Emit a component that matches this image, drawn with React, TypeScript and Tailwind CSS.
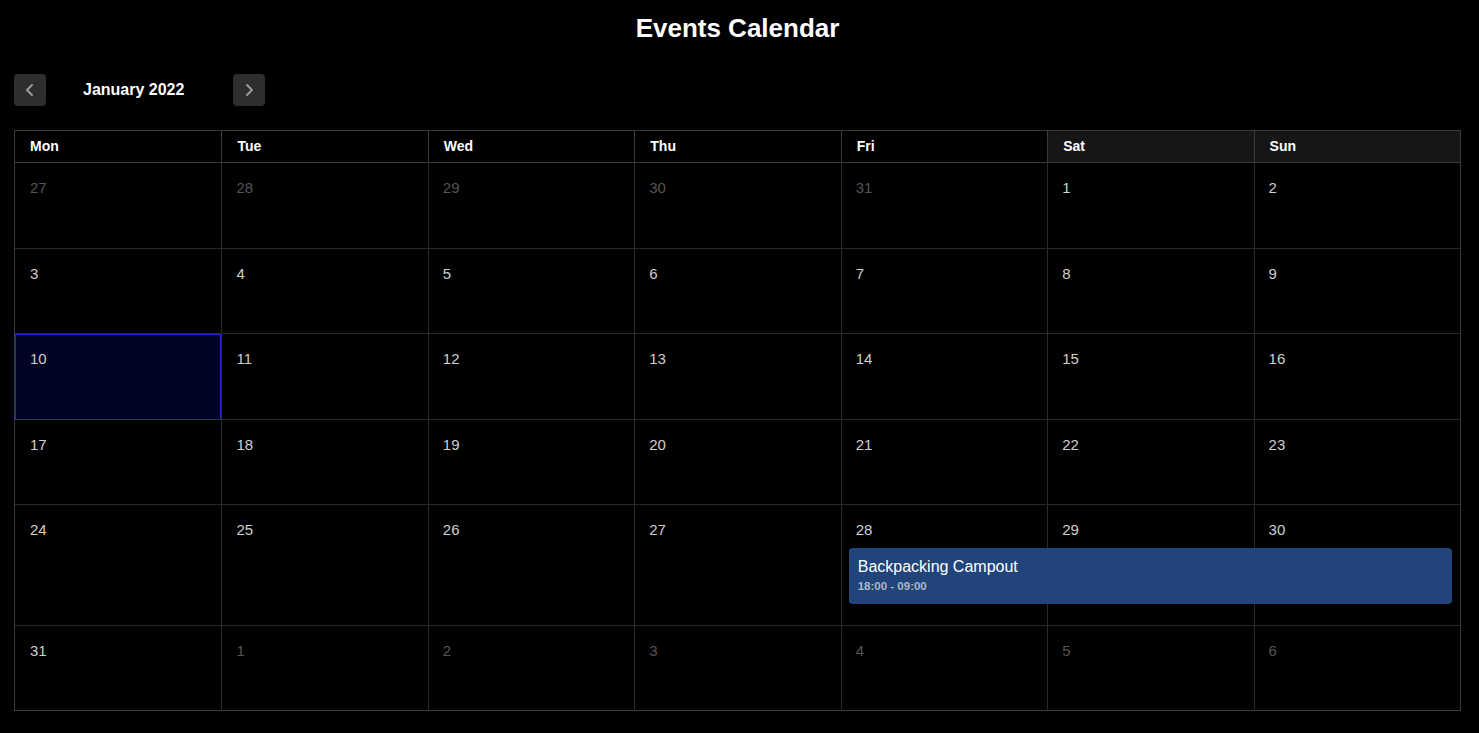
import React from "react";

type Day = { d: number; other?: boolean; today?: boolean };

const colStart = [
  "col-start-1",
  "col-start-2",
  "col-start-3",
  "col-start-4",
  "col-start-5",
  "col-start-6",
  "col-start-7",
];

const dayNames = ["Mon", "Tue", "Wed", "Thu", "Fri", "Sat", "Sun"];

function buildWeeks(): Day[][] {
  const days: Day[] = [];
  [27, 28, 29, 30, 31].forEach((d) => days.push({ d, other: true }));
  for (let d = 1; d <= 31; d++) days.push({ d, today: d === 10 });
  [1, 2, 3, 4, 5, 6].forEach((d) => days.push({ d, other: true }));
  const weeks: Day[][] = [];
  for (let i = 0; i < days.length; i += 7) weeks.push(days.slice(i, i + 7));
  return weeks;
}

function Chevron({ dir }: { dir: "left" | "right" }) {
  return (
    <svg width="12" height="14" viewBox="0 0 12 14" fill="none">
      <polyline
        points={dir === "left" ? "8,2 3,7 8,12" : "4,2 9,7 4,12"}
        stroke="#9a9a9a"
        strokeWidth="2"
        strokeLinecap="round"
        strokeLinejoin="round"
      />
    </svg>
  );
}

function cellClass(day: Day, i: number, last: boolean) {
  const h = last ? "min-h-[84px]" : "min-h-[85.5px]";
  if (day.today) {
    return `${colStart[i]} row-start-1 row-span-2 ${h} border border-[#2424d4] bg-[#000322]`;
  }
  return `${colStart[i]} row-start-1 row-span-2 ${h} ${
    i > 0 ? "border-l border-[#2a2a2a]" : ""
  } ${!last ? "border-b border-[#2a2a2a]" : ""}`;
}

export default function App() {
  const weeks = buildWeeks();

  return (
    <div className="min-h-screen bg-black pr-[4px] font-['Liberation_Sans',Arial,sans-serif] text-white">
      <h1 className="pt-[13px] text-center text-[26px] font-bold leading-[30px]">
        Events Calendar
      </h1>

      <div className="ml-[14px] mt-[31px] flex h-[32px] items-center">
        <button className="flex h-[32px] w-[32px] items-center justify-center rounded-[4px] bg-[#2e2e2e]">
          <Chevron dir="left" />
        </button>
        <span className="ml-[37px] text-[16px] font-bold">January 2022</span>
        <button className="ml-[49px] flex h-[32px] w-[32px] items-center justify-center rounded-[4px] bg-[#2e2e2e]">
          <Chevron dir="right" />
        </button>
      </div>

      <div className="mx-[14px] mt-[24px] border border-[#3a3a3a]">
        <div className="grid grid-cols-7 border-b border-[#3a3a3a]">
          {dayNames.map((n, i) => (
            <div
              key={n}
              className={`flex h-[31px] items-center pl-[15px] text-[14px] font-bold ${
                i > 0 ? "border-l border-[#3a3a3a]" : ""
              } ${i >= 5 ? "bg-[#161616]" : ""}`}
            >
              {n}
            </div>
          ))}
        </div>

        {weeks.map((week, wi) => (
          <div key={wi} className="grid grid-cols-7 grid-rows-[auto_auto]">
            {week.map((day, i) => (
              <div key={"bg" + i} className={cellClass(day, i, wi === weeks.length - 1)} />
            ))}
            {week.map((day, i) => (
              <div
                key={"n" + i}
                className={`${colStart[i]} row-start-1 h-[43px] pl-[15px] pt-[16px] text-[15px] leading-[17px] ${
                  day.other ? "text-[#555555]" : "text-[#cfcfcf]"
                }`}
              >
                {day.d}
              </div>
            ))}
            {wi === 4 && (
              <div className="col-start-5 col-span-3 row-start-2 mb-[22px] ml-[8px] mr-[8px] h-[56px] rounded-[4px] bg-[#21457a] pl-[9px] pt-[10px]">
                <div className="text-[16px] leading-[18px] text-white">
                  Backpacking Campout
                </div>
                <div className="mt-[3px] text-[11.5px] font-bold leading-[14px] text-[#aeb7c6]">
                  18:00 - 09:00
                </div>
              </div>
            )}
          </div>
        ))}
      </div>
    </div>
  );
}
